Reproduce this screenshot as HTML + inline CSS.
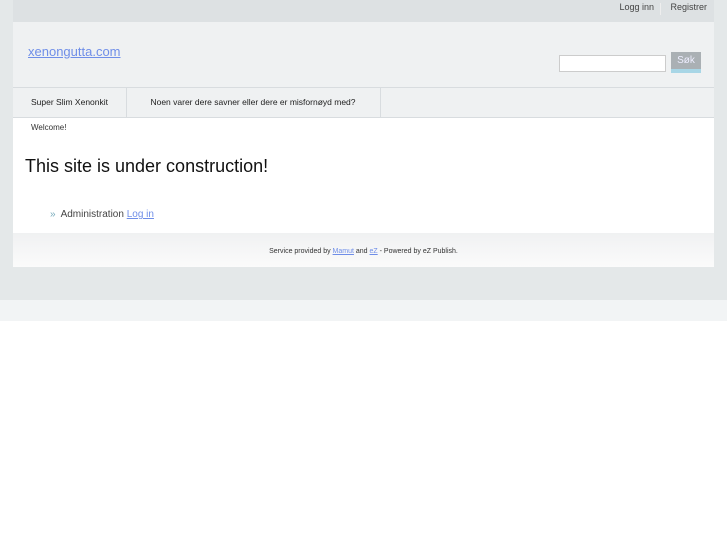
<!DOCTYPE html>
<html><head><meta charset="utf-8"><style>
body{margin:0;width:727px;height:545px;background:#fff;font-family:"Liberation Sans",sans-serif;position:relative;overflow:hidden}
.bg{position:absolute;left:0;top:0;width:727px;height:300px;background:#e4e8e9}
.bg2{position:absolute;left:0;top:300px;width:727px;height:21px;background:#f2f4f5}
.c{position:absolute;left:13px;width:701px}
a{color:#6f8ee8;text-decoration:underline}
</style></head><body>
<div class="bg"></div><div class="bg2"></div>
<div class="c" style="top:0;height:22px;background:#dde1e3;font-size:9px;color:#444">
<span style="position:absolute;right:60px;top:2px">Logg inn</span>
<span style="position:absolute;right:53px;top:3px;width:1px;height:12px;background:#eee"></span>
<span style="position:absolute;right:7px;top:2px">Registrer</span>
</div>
<div class="c" style="top:22px;height:65px;background:#eff1f2">
<a style="position:absolute;left:15px;top:22px;font-size:13px">xenongutta.com</a>
<div style="position:absolute;left:546px;top:33px;width:105px;height:15px;background:#fff;border:1px solid #ccc"></div>
<div style="position:absolute;left:658px;top:30px;width:30px;height:21px;background:#aab0b4;color:#eef;font-size:10px;text-align:center;line-height:17px;border-bottom:4px solid #a8d6e6;box-sizing:border-box">Søk</div>
</div>
<div class="c" style="top:87px;height:31px;background:#eff1f2;border-top:1px solid #d8dcdf;border-bottom:1px solid #d8dcdf;box-sizing:border-box;font-size:8.5px;color:#222">
<span style="position:absolute;left:0;top:0;width:113px;height:29px;border-right:1px solid #d8dcdf;line-height:29px;text-align:center">Super Slim Xenonkit</span>
<span style="position:absolute;left:113px;top:0;width:254px;height:29px;border-right:1px solid #d8dcdf;line-height:29px;text-align:center">Noen varer dere savner eller dere er misfornøyd med?</span>
</div>
<div class="c" style="top:118px;height:115px;background:#fff">
<div style="position:absolute;left:18px;top:5px;font-size:8px;color:#333">Welcome!</div>
<div style="position:absolute;left:12px;top:38px;font-size:18px;color:#111">This site is under construction!</div>
<div style="position:absolute;left:37px;top:91px;font-size:10px;color:#444"><span style="color:#7ab">»</span>&nbsp; Administration <a>Log in</a></div>
</div>
<div class="c" style="top:233px;height:34px;background:linear-gradient(#f0f1f2,#fbfbfb);font-size:7px;color:#333;text-align:center;line-height:38px">Service provided by <a>Mamut</a> and <a>eZ</a> - Powered by eZ Publish.</div>
</body></html>
